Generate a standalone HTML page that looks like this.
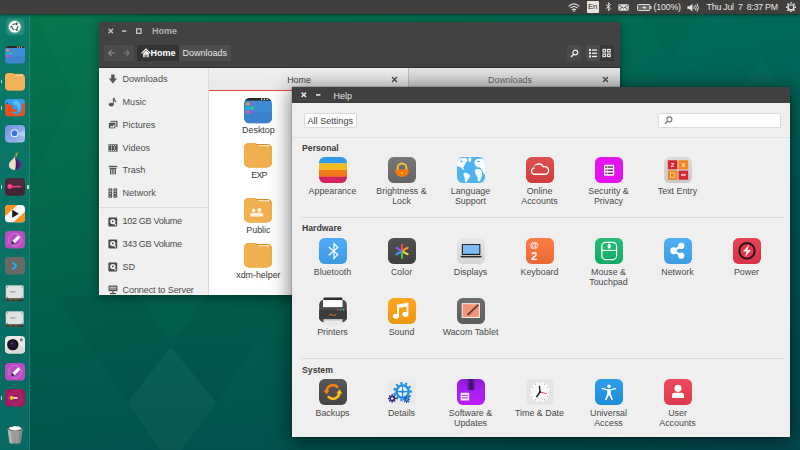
<!DOCTYPE html>
<html>
<head>
<meta charset="utf-8">
<title>Desktop</title>
<style>
*{box-sizing:border-box;margin:0;padding:0}
html,body{width:800px;height:450px;overflow:hidden}
body{position:relative;font-family:"Liberation Sans",sans-serif;font-size:8.9px;color:#444;background:#04685a}
#bg{position:absolute;left:0;top:0;width:800px;height:450px}
#panel{position:absolute;left:0;top:0;width:800px;height:14px;background:#403f3d;color:#e8e8e8;font-size:8.8px;letter-spacing:-.2px;line-height:14px;box-shadow:0 1px 3px rgba(0,0,0,.55)}
#panel span{position:absolute;top:0;white-space:nowrap}
#panel svg{position:absolute}
#launcher{position:absolute;left:0;top:14px;width:30px;height:436px;background:linear-gradient(#0a7b68,#097265 50%,#086962);border-right:1px solid rgba(255,255,255,.10)}
#launcher svg{position:absolute;left:5px;width:20px;height:17.6px}
/* files window */
#files{position:absolute;left:99px;top:22px;width:521px;height:273px;background:#fff;box-shadow:0 2px 10px rgba(0,0,0,.45)}
#files .hdr{position:absolute;left:0;top:0;width:521px;height:46px;background:#424242}
#files .title{position:absolute;left:53px;top:3px;font-weight:bold;color:#b0b0b0;font-size:9px;line-height:12px}
.tb{position:absolute;top:23.3px;height:16px;background:#4d4d4d;color:#e4e4e4;line-height:16px;font-size:9px;white-space:nowrap}
#side{position:absolute;left:0;top:46px;width:110px;height:227px;background:#f0f0f0;border-right:1px solid #dadada;overflow:hidden}
#side div.r{position:absolute;left:23.5px;color:#4c4c4c;line-height:12px;white-space:nowrap;font-size:9.1px}
#side svg{position:absolute;left:9px;width:10px;height:10px}
#tabs{position:absolute;left:110px;top:46px;width:411px;height:22px;background:linear-gradient(#e6e6e6,#d2d2d2);line-height:24.4px;color:#555}
.fl{position:absolute;width:70px;text-align:center;color:#3a3a3a;line-height:11px}
.fi{position:absolute;width:28px;height:26px}
/* settings window */
#set{position:absolute;left:292px;top:87px;width:498px;height:350px;background:#efefef;box-shadow:0 3px 20px 1px rgba(0,0,0,.55),0 0 0 .5px rgba(0,0,0,.25)}
#set .tbar{position:absolute;left:0;top:0;width:498px;height:16px;background:#404040}
#set .sec{position:absolute;left:10px;font-weight:bold;color:#3a3a3a;line-height:12px;font-size:8.7px}
.sep{position:absolute;left:9px;width:483px;height:1px;background:#dcdcdc}
.it{position:absolute;width:69px;height:50px}
.ic{position:absolute;left:21px;top:0;width:28px;height:26px;overflow:visible}
.lb{position:absolute;left:-10px;width:89px;top:28.6px;text-align:center;color:#4a4a4a;line-height:10px}
</style>
</head>
<body>
<svg id="bg" viewBox="0 0 800 450">
<defs>
<linearGradient id="bgt" x1="0" y1="0" x2="1" y2="0"><stop offset="0" stop-color="#0a7a4f"/><stop offset=".4" stop-color="#057451"/><stop offset="1" stop-color="#006b59"/></linearGradient>
<linearGradient id="bgb" x1="0" y1="0" x2="1" y2="0"><stop offset="0" stop-color="#00544a"/><stop offset=".4" stop-color="#00524b"/><stop offset="1" stop-color="#04494e"/></linearGradient>
<linearGradient id="bgm" x1="0" y1="0" x2="0" y2="1"><stop offset="0" stop-color="#fff" stop-opacity="0"/><stop offset="1" stop-color="#fff" stop-opacity="1"/></linearGradient>
<mask id="bgmask"><rect width="800" height="450" fill="url(#bgm)"/></mask>
</defs>
<rect width="800" height="450" fill="url(#bgt)"/>
<rect width="800" height="450" fill="url(#bgb)" mask="url(#bgmask)"/>
<path d="M30 14 L36 14 L73 96 L30 188 Z" fill="#000" opacity=".025"/>
<path d="M55 296 L140 296 L171 347 L206 296 L290 296 L216 402 L171 347 L128 402 Z" fill="#000" opacity=".04"/>
<path d="M171 347 L216 402 L182 450 L160 450 L128 402 Z" fill="#fff" opacity=".03"/>
<path d="M640 14 L700 14 L670 60 Z" fill="#000" opacity=".025"/>
<path d="M762 58 L790 100 L735 100 Z" fill="#fff" opacity=".025"/>

</svg>
<div id="launcher">
<svg style="top:5.6px" viewBox="0 0 20 17.6" overflow="visible"><rect x="1" y="-1.8" width="18.4" height="17" rx="4.5" fill="#fff" opacity=".13"/><circle cx="9.7" cy="6.8" r="6.9" fill="#fff" opacity=".3"/><circle cx="9.7" cy="6.8" r="5.8" fill="#fbfdfc"/><circle cx="9.9" cy="6.8" r="3" fill="none" stroke="#24302e" stroke-width=".95"/><g fill="#fbfdfc"><rect x="9.4" y="2.4" width="1" height="2.4" transform="rotate(60 9.9 6.8)"/><rect x="9.4" y="2.4" width="1" height="2.4" transform="rotate(180 9.9 6.8)"/><rect x="9.4" y="2.4" width="1" height="2.4" transform="rotate(300 9.9 6.8)"/></g><g fill="#24302e"><circle cx="6" cy="6.8" r=".8"/><circle cx="11.9" cy="3.4" r=".8"/><circle cx="11.9" cy="10.2" r=".8"/></g></svg>
<svg style="top:32.1px" viewBox="0 0 20 17.6" overflow="visible"><defs><clipPath id="lc1"><rect width="20" height="17.6" rx="4"/></clipPath></defs><g clip-path="url(#lc1)"><rect width="20" height="17.6" fill="#3f8cd8"/><rect y="10" width="20" height="7.6" fill="#3c84cc"/><rect width="20" height="2" fill="#2a2a2a"/><circle cx="12.6" cy="1" r=".6" fill="#fff"/><circle cx="14.6" cy="1" r=".6" fill="#fff"/><circle cx="16.6" cy="1" r=".6" fill="#fff"/></g><rect x="1.6" y="3.2" width="2.2" height="2" fill="#f5a623"/><rect x="4.6" y="3.2" width="2.2" height="2" fill="#a05ad8"/><rect x="1.6" y="6.2" width="2.2" height="2" fill="#22b2ee"/><rect x="4.6" y="6.2" width="2.2" height="2" fill="#1ee06a"/><rect x="1.6" y="9.2" width="2.2" height="2" fill="#ee5a8c"/><rect x="4.6" y="9.2" width="2.2" height="2" fill="#a04cf0"/></svg>
<svg style="top:58.5px" viewBox="0 0 20 17.6" overflow="visible"><path d="M4 0 H7 Q8.4 0 9.2 .8 H16 Q20 .8 20 4.8 V13.6 Q20 17.6 16 17.6 H4 Q0 17.6 0 13.6 V4 Q0 0 4 0 Z" fill="#dc9226"/><path d="M9.8 1.6 H18 V3 H9.8 Z" fill="#fff4e0"/><path d="M4 0 H6.8 Q8 0 8.8 1.2 Q9.6 2.4 11 2.4 H16.4 Q20 2.4 20 6 V13.6 Q20 17.6 16 17.6 H4 Q0 17.6 0 13.6 V4 Q0 0 4 0 Z" fill="#f3b257"/></svg>
<svg style="top:85.2px" viewBox="0 0 20 17.6" overflow="visible"><defs><clipPath id="lc3"><rect width="20" height="17.6" rx="4"/></clipPath></defs><g clip-path="url(#lc3)"><rect width="20" height="17.6" fill="#f04f1d"/><path d="M0 0 H20 V4 Q17.4 3.4 16.8 6 Q17.8 10 15.6 13.4 Q13.6 16 10.4 16.4 Q12.8 13 11.8 10.4 Q9.8 9.6 8 10.6 Q6.4 8.6 7.6 6 Q4.4 6.2 1.8 4.8 L0 5 Z" fill="#2f9ff0"/><path d="M9 1.6 Q14.6 1 15.4 6.4 Q15.8 10.4 13 13 Q14.4 9.6 12.6 7.6 Q10.6 5.4 8.4 5.2 Q8 3 9 1.6 Z" fill="#5cc0f8"/><path d="M6.6 11.4 Q9.6 14 13 12.4 Q11 15.6 7.6 14 Z" fill="#2f9ff0"/><path d="M1.2 4.6 L3 3.4 L3.4 5.2 Z" fill="#3a2a20"/></g></svg>
<svg style="top:111.4px" viewBox="0 0 20 17.6" overflow="visible"><defs><linearGradient id="lg4" x1="0" y1="0" x2="1" y2="1"><stop offset="0" stop-color="#6d90dc"/><stop offset="1" stop-color="#a9c0ee"/></linearGradient></defs><rect width="20" height="17.6" rx="4" fill="url(#lg4)"/><path d="M10 8.8 L20 6 V12 Z" fill="#c6d6f4" opacity=".7"/><path d="M10 8.8 L3 17.6 H12 Z" fill="#8aa6e4" opacity=".7"/><circle cx="9.6" cy="8.2" r="3.9" fill="#eef3fc"/><circle cx="9.6" cy="8.2" r="2.9" fill="#3c72e2"/></svg>
<svg style="top:138.4px" viewBox="0 0 20 17.6" overflow="visible"><path d="M10.4 4.6 Q10.2 1.6 12.8 -.6 Q12.6 2.4 11.4 4.8 Z" fill="#b8b430"/><path d="M9.8 4.8 Q9.4 2 10.6 .6" stroke="#6a8a2a" stroke-width=".7" fill="none"/><path d="M10 4.2 Q11.4 6.4 14.2 8.6 Q17.6 11.8 15.6 15.4 Q13.6 18.4 9.6 18 Z" fill="#5b2e8e"/><path d="M10 4.2 Q9.2 6.4 6.2 8.6 Q2.8 11.6 4.4 15.2 Q6.2 18.4 10 18 Q11.6 13 10 4.2 Z" fill="#e9dfc2"/><path d="M10 6 Q12.8 11 10.4 17.6 Q15 16 13.6 11 Q12.6 8.4 10 6 Z" fill="#3c1a6a"/></svg>
<svg style="top:164.2px" viewBox="0 0 20 17.6" overflow="visible"><rect width="20" height="17.6" rx="4" fill="#4a2b3c"/><rect y="9" width="20" height="8.6" rx="4" fill="#432636"/><rect x="5" y="7.8" width="11" height="1.7" rx=".8" fill="#e83a86"/><circle cx="4.9" cy="8.6" r="2.5" fill="#f2357e"/><circle cx="4.6" cy="8.2" r="1" fill="#f86aa4"/></svg>
<svg style="top:190.7px" viewBox="0 0 20 17.6" overflow="visible"><defs><clipPath id="lc7"><rect width="20" height="17.6" rx="4"/></clipPath></defs><g clip-path="url(#lc7)"><rect width="20" height="17.6" fill="#fafafa"/><path d="M0 0 H12.4 L0 11.2 Z" fill="#f7941d"/><path d="M20 17.6 H8 L20 6.8 Z" fill="#f7941d"/><path d="M7.2 4.8 L13.8 8.8 L7.2 12.8 Z" fill="#1a1a1a"/></g></svg>
<svg style="top:217.0px" viewBox="0 0 20 17.6" overflow="visible"><rect width="20" height="17.6" rx="4" fill="#b94cc2"/><circle cx="10" cy="8.8" r="6.4" fill="none" stroke="#d48ada" stroke-width=".9" opacity=".8"/><path d="M7.4 10 L13.2 4.2 L15.4 6.4 L9.6 12.2 Z" fill="#fdfdfd"/><path d="M7.4 10 L9.6 12.2 L6 13.4 Z" fill="#2a2a2a"/></svg>
<svg style="top:243.2px" viewBox="0 0 20 17.6" overflow="visible"><rect width="20" height="17.6" rx="4" fill="#6b6868"/><path d="M7.4 5 L11.4 8.8 L7.4 12.6" fill="none" stroke="#1ab9f2" stroke-width="1.7"/></svg>
<svg style="top:269.7px" viewBox="0 0 20 17.6" overflow="visible"><rect x="1" y="1.6" width="17.4" height="13" rx="1.2" fill="#dfe2e2"/><rect x="1" y="1.6" width="17.4" height="13" rx="1.2" fill="none" stroke="#c2c6c6" stroke-width=".6"/><rect x="5" y="7" width="5.6" height="1.6" fill="#a8aeb0"/><g fill="#555"><circle cx="2.4" cy="3" r=".55"/><circle cx="17" cy="3" r=".55"/><circle cx="2.4" cy="13.2" r=".55"/><circle cx="17" cy="13.2" r=".55"/></g><rect x="1" y="14.4" width="17.4" height="2.4" fill="#3e3a30"/><rect x="4" y="15" width="3" height="1.2" fill="#8a6a2a"/><rect x="9" y="15" width="4" height="1.2" fill="#7a5a22"/></svg>
<svg style="top:296.0px" viewBox="0 0 20 17.6" overflow="visible"><rect x="1" y="1.6" width="17.4" height="13" rx="1.2" fill="#dfe2e2"/><rect x="1" y="1.6" width="17.4" height="13" rx="1.2" fill="none" stroke="#c2c6c6" stroke-width=".6"/><rect x="5" y="7" width="5.6" height="1.6" fill="#a8aeb0"/><g fill="#555"><circle cx="2.4" cy="3" r=".55"/><circle cx="17" cy="3" r=".55"/><circle cx="2.4" cy="13.2" r=".55"/><circle cx="17" cy="13.2" r=".55"/></g><rect x="1" y="14.4" width="17.4" height="2.4" fill="#3e3a30"/><rect x="4" y="15" width="3" height="1.2" fill="#8a6a2a"/><rect x="9" y="15" width="4" height="1.2" fill="#7a5a22"/></svg>
<svg style="top:322.0px" viewBox="0 0 20 17.6" overflow="visible"><rect width="20" height="17.6" rx="4" fill="#e9e9e9"/><rect y="10" width="20" height="7.6" rx="4" fill="#dcdcdc"/><rect x="15" y="2.6" width="2.6" height="2.6" rx=".4" fill="#7a7a7a"/><circle cx="7.8" cy="8.6" r="5.7" fill="#161418"/><circle cx="7.8" cy="8.6" r="3.4" fill="#2a1840"/><circle cx="6.8" cy="7.4" r="1.2" fill="#4a3470"/></svg>
<svg style="top:348.5px" viewBox="0 0 20 17.6" overflow="visible"><rect width="20" height="17.6" rx="4" fill="#b94cc2"/><circle cx="10" cy="8.8" r="6.4" fill="none" stroke="#d48ada" stroke-width=".9" opacity=".8"/><path d="M7.4 10 L13.2 4.2 L15.4 6.4 L9.6 12.2 Z" fill="#fdfdfd"/><path d="M7.4 10 L9.6 12.2 L6 13.4 Z" fill="#2a2a2a"/></svg>
<svg style="top:375.0px" viewBox="0 0 20 17.6" overflow="visible"><rect width="20" height="17.6" rx="4" fill="#a11a5e"/><circle cx="10" cy="8.8" r="7" fill="none" stroke="#c4508a" stroke-width=".6" opacity=".7"/><circle cx="10" cy="8.8" r="4.6" fill="none" stroke="#c4508a" stroke-width=".6" opacity=".7"/><rect x="7" y="8" width="5.6" height="1.7" rx=".5" fill="#fbeef2"/><circle cx="6.6" cy="8.8" r="2.1" fill="#fba81e"/><circle cx="6.6" cy="8.8" r=".8" fill="#fde08a"/></svg>
<svg style="top:412.2px" viewBox="0 0 20 17.6" overflow="visible"><path d="M2.6 2.4 H17.6 L15.8 16 Q15.6 17.4 14 17.4 H6.2 Q4.6 17.4 4.4 16 Z" fill="#9b9b9b"/><path d="M2.6 2.4 H6 L7 17.4 H6.2 Q4.6 17.4 4.4 16 Z" fill="#b4b4b4"/><path d="M14.4 2.4 H17.6 L15.8 16 Q15.6 17.4 14 17.4 H13.4 Z" fill="#868686"/><ellipse cx="10.1" cy="2.6" rx="7.7" ry="2.2" fill="#4a4a4a"/><path d="M3.6 2.8 Q5 .2 7.4 1 Q9 -.8 11.4 .6 Q14 -.4 15.2 1.4 Q16.8 1.6 16.6 3 Q13 4.6 10 4.4 Q6 4.4 3.6 2.8 Z" fill="#f6f6f2"/></svg>
<div style="position:absolute;left:0.8px;top:65.9px;width:1.6px;height:3.2px;background:#e8f0f0;border-radius:.6px;opacity:.85"></div>
<div style="position:absolute;left:0.8px;top:92.4px;width:1.6px;height:3.2px;background:#e8f0f0;border-radius:.6px;opacity:.85"></div>
<div style="position:absolute;left:0.8px;top:171.4px;width:1.6px;height:3.2px;background:#e8f0f0;border-radius:.6px;opacity:.85"></div>
<div style="position:absolute;left:27.2px;top:171.4px;width:1.6px;height:3.2px;background:#e8f0f0;border-radius:.6px;opacity:.85"></div>
<div style="position:absolute;left:0.8px;top:382.4px;width:1.6px;height:3.2px;background:#e8f0f0;border-radius:.6px;opacity:.85"></div>
</div>
<div id="panel">
<svg style="left:568px;top:3px;width:12px;height:9px" viewBox="0 0 12 9"><g fill="none" stroke="#e4e4e4" stroke-width="1.15"><path d="M.6 3.4 Q6 -1.6 11.4 3.4"/><path d="M2.4 5.2 Q6 1.8 9.6 5.2"/><path d="M4.2 7 Q6 5.2 7.8 7"/></g><circle cx="6" cy="8.1" r=".8" fill="#e4e4e4"/></svg>
<div style="position:absolute;left:586.6px;top:1.4px;width:12px;height:11.2px;background:#e9e6e0;border-radius:1px;color:#1e1e1e;font-size:7.8px;line-height:11.4px;text-align:center;letter-spacing:-.1px">En</div>
<svg style="left:604.6px;top:2.4px;width:7px;height:9.4px" viewBox="0 0 7 9.4"><path d="M1 2.6 L5.6 6.6 L3.4 8.8 V.6 L5.6 2.8 L1 6.8" fill="none" stroke="#e4e4e4" stroke-width=".9"/></svg>
<svg style="left:618.2px;top:3.6px;width:11px;height:7px" viewBox="0 0 11 7"><rect x=".3" y=".3" width="10.4" height="6.4" rx=".6" fill="#e0e0e0"/><path d="M.8 .8 L5.5 4.2 L10.2 .8 M.8 6.2 L4 3.4 M10.2 6.2 L7 3.4" stroke="#3c3b3a" stroke-width=".8" fill="none"/></svg>
<svg style="left:637px;top:3.6px;width:15px;height:7px" viewBox="0 0 15 7"><rect x=".5" y=".5" width="12.4" height="6" rx=".8" fill="#6a6a68" stroke="#dcdcdc" stroke-width="1"/><rect x="13.2" y="2" width="1.3" height="3" fill="#dcdcdc"/><path d="M5.2 3.6 H8.6 M7 2.2 L8.8 3.6 L7 5" stroke="#eee" stroke-width=".9" fill="none"/></svg>
<span style="left:653.6px">(100%)</span>
<svg style="left:687.4px;top:2.6px;width:12.4px;height:9.2px" viewBox="0 0 12.4 9.2"><path d="M.4 3.2 H2.6 L5.4 .8 V8.4 L2.6 6 H.4 Z" fill="#e4e4e4"/><g fill="none" stroke="#e4e4e4" stroke-width="1"><path d="M6.8 3 Q7.8 4.6 6.8 6.2"/><path d="M8.4 1.8 Q10.2 4.6 8.4 7.4"/><path d="M10 .6 Q12.6 4.6 10 8.6"/></g></svg>
<span style="left:706.6px;white-space:pre;word-spacing:-.2px">Thu Jul  7  8:37 PM</span>
<svg style="left:786px;top:2.2px;width:10px;height:10px" viewBox="0 0 10 10"><circle cx="5" cy="5.2" r="2.9" fill="none" stroke="#e4e4e4" stroke-width="1.5"/><g stroke="#e4e4e4" stroke-width="1.5"><path d="M1.2 5.2 H0 M8.8 5.2 H10 M5 9 V10 M2.3 2.5 L1.4 1.6 M7.7 2.5 L8.6 1.6 M2.3 7.9 L1.4 8.8 M7.7 7.9 L8.6 8.8"/></g><path d="M5 0 V4.4" stroke="#3c3b3a" stroke-width="2.6"/><path d="M5 0 V4.2" stroke="#e4e4e4" stroke-width="1.1"/></svg>

</div>
<div id="files">
<div class="hdr"></div><div style="position:absolute;left:0;top:45px;width:521px;height:1px;background:#303030"></div>
<svg style="position:absolute;left:8px;top:5px;width:40px;height:8px" viewBox="0 0 40 8"><path d="M1.6 1.8 L6 6.2 M6 1.8 L1.6 6.2" stroke="#c4c4c4" stroke-width="1.4"/><path d="M15 4.1 h4.4" stroke="#c4c4c4" stroke-width="1.5"/><rect x="29.6" y="1.9" width="4.4" height="4.4" fill="none" stroke="#c4c4c4" stroke-width="1.3"/></svg>
<div class="title">Home</div>
<div class="tb" style="left:5px;width:29.5px;background:#4b4b4b"></div>
<svg style="position:absolute;left:5px;top:23.3px;width:30px;height:16px" viewBox="0 0 30 16"><path d="M5 8 h6 M7.6 5.2 L4.8 8 L7.6 10.8" stroke="#8e8e8e" stroke-width="1.2" fill="none"/><path d="M19 8 h6 M22.4 5.2 L25.2 8 L22.4 10.8" stroke="#7c7c7c" stroke-width="1.2" fill="none"/><path d="M14.8 1 v14" stroke="#444" stroke-width=".6"/></svg>
<div class="tb" style="left:38px;width:41.5px;background:#333;color:#fff;font-weight:bold;padding-left:13.5px">Home</div>
<svg style="position:absolute;left:42px;top:26.3px;width:10px;height:10px" viewBox="0 0 10 10"><path d="M.6 5.4 L5 1 L9.4 5.4" stroke="#fff" stroke-width="1.2" fill="none"/><path d="M2.2 5.2 V9.2 H3.6 V6.6 H4.6 V9.2 H5.4 V6.6 H6.4 V9.2 H7.8 V5.2 L5 2.6 Z" fill="#fff"/></svg>
<div class="tb" style="left:79.5px;width:52.5px;text-align:center">Downloads</div>
<div class="tb" style="left:468px;width:14px;background:#4b4b4b"></div>
<svg style="position:absolute;left:470.5px;top:26.8px;width:9px;height:9px" viewBox="0 0 9 9"><circle cx="5.3" cy="3.5" r="2.4" fill="none" stroke="#f0f0f0" stroke-width="1.2"/><path d="M3.6 5.2 L1 7.9" stroke="#f0f0f0" stroke-width="1.4"/></svg>
<div class="tb" style="left:487px;width:13.5px;background:#4d4d4d"></div>
<div class="tb" style="left:500.5px;width:14px;background:#383838"></div>
<svg style="position:absolute;left:487px;top:23.3px;width:28px;height:16px" viewBox="0 0 28 16"><g fill="#f0f0f0"><rect x="3" y="4" width="2" height="2"/><rect x="3" y="7.2" width="2" height="2"/><rect x="3" y="10.4" width="2" height="2"/><rect x="6" y="4.4" width="5" height="1.3"/><rect x="6" y="7.6" width="5" height="1.3"/><rect x="6" y="10.8" width="5" height="1.3"/></g><g fill="none" stroke="#f0f0f0" stroke-width="1.1"><rect x="17" y="4.4" width="2.6" height="2.6"/><rect x="21.6" y="4.4" width="2.6" height="2.6"/><rect x="17" y="9" width="2.6" height="2.6"/><rect x="21.6" y="9" width="2.6" height="2.6"/></g></svg>
<div id="side">
<svg style="top:5.5px" viewBox="0 0 10 10"><path d="M3.2 .4 h3.4 v4.2 h2.4 L4.9 9.6 L.8 4.6 h2.4 z" fill="#555"/></svg>
<div class="r" style="top:4.7px">Downloads</div>
<svg style="top:28.6px" viewBox="0 0 10 10"><path d="M5.4 1 V7.2" stroke="#555" stroke-width="1"/><path d="M5.4 1 L6.4 .6 Q7 3.6 8.6 5 L8 5.6 Q6.4 4.4 5.6 3 Z" fill="#555"/><ellipse cx="3.2" cy="7.6" rx="2.5" ry="1.9" fill="#555"/></svg>
<div class="r" style="top:27.8px">Music</div>
<svg style="top:51.6px" viewBox="0 0 10 10"><rect x="2.6" y=".8" width="7" height="6.2" fill="#666"/><rect x=".6" y="2.4" width="7.2" height="6.4" fill="#555" stroke="#f0f0f0" stroke-width=".7"/><path d="M1.8 7.6 L3.4 5.6 L4.4 6.6 L6.4 4 V7.6 Z" fill="#e6e6e6"/></svg>
<div class="r" style="top:50.6px">Pictures</div>
<svg style="top:74.6px" viewBox="0 0 10 10"><rect x=".4" y="1.2" width="9.2" height="7.4" fill="#555"/><g fill="#f0f0f0"><rect x="1.2" y="1.8" width="1" height="1"/><rect x="3.2" y="1.8" width="1" height="1"/><rect x="5.2" y="1.8" width="1" height="1"/><rect x="7.2" y="1.8" width="1" height="1"/><rect x="1.2" y="7" width="1" height="1"/><rect x="3.2" y="7" width="1" height="1"/><rect x="5.2" y="7" width="1" height="1"/><rect x="7.2" y="7" width="1" height="1"/><rect x="3.1" y="3.4" width=".6" height="3"/><rect x="6.1" y="3.4" width=".6" height="3"/></g></svg>
<div class="r" style="top:73.5px">Videos</div>
<svg style="top:97px" viewBox="0 0 10 10"><rect x=".8" y=".8" width="8.4" height="1.5" fill="#555"/><rect x="1.6" y="3" width="6.8" height="1" fill="#555"/><rect x="2" y="4" width="1.4" height="5.4" fill="#555"/><rect x="4.3" y="4" width="1.4" height="5.4" fill="#555"/><rect x="6.6" y="4" width="1.4" height="5.4" fill="#555"/></svg>
<div class="r" style="top:96px">Trash</div>
<svg style="top:120px" viewBox="0 0 10 10"><g fill="none" stroke="#555" stroke-width="1.1"><rect x="1" y="1" width="2.6" height="2"/><rect x="6" y="1" width="2.6" height="2"/><rect x="1" y="4.4" width="2.6" height="2"/><rect x="6" y="4.4" width="2.6" height="2"/><rect x="1" y="7.6" width="2.6" height="1.6"/><rect x="6" y="7.6" width="2.6" height="1.6"/></g></svg>
<div class="r" style="top:119px">Network</div>
<div style="position:absolute;left:0;top:139px;width:110px;height:1px;background:#dedede"></div>
<svg style="top:148.6px" viewBox="0 0 10 10"><rect x=".4" y=".6" width="8.8" height="8.8" rx=".8" fill="#4a4a4a"/><circle cx="4.8" cy="4.6" r="2.7" fill="#f0f0f0"/><circle cx="4.8" cy="4.6" r="1" fill="#4a4a4a"/><path d="M5 5 L8 8.4" stroke="#f0f0f0" stroke-width="1.2"/></svg>
<div class="r" style="top:147.3px;letter-spacing:-.34px">102 GB Volume</div>
<svg style="top:171.4px" viewBox="0 0 10 10"><rect x=".4" y=".6" width="8.8" height="8.8" rx=".8" fill="#4a4a4a"/><circle cx="4.8" cy="4.6" r="2.7" fill="#f0f0f0"/><circle cx="4.8" cy="4.6" r="1" fill="#4a4a4a"/><path d="M5 5 L8 8.4" stroke="#f0f0f0" stroke-width="1.2"/></svg>
<div class="r" style="top:170px;letter-spacing:-.34px">343 GB Volume</div>
<svg style="top:194.4px" viewBox="0 0 10 10"><rect x=".4" y=".6" width="8.8" height="8.8" rx=".8" fill="#4a4a4a"/><circle cx="4.8" cy="4.6" r="2.7" fill="#f0f0f0"/><circle cx="4.8" cy="4.6" r="1" fill="#4a4a4a"/><path d="M5 5 L8 8.4" stroke="#f0f0f0" stroke-width="1.2"/></svg>
<div class="r" style="top:193px">SD</div>
<svg style="top:216.6px" viewBox="0 0 10 10"><rect x=".6" y=".6" width="8.8" height="5.6" fill="#4a4a4a"/><rect x="1.6" y="1.8" width="6.8" height=".9" fill="#f0f0f0"/><rect x="1.6" y="3.6" width="6.8" height=".9" fill="#f0f0f0"/><rect x="4.4" y="6.2" width="1.2" height="2" fill="#4a4a4a"/><rect x="2" y="8" width="6" height="1.2" fill="#4a4a4a"/></svg>
<div class="r" style="top:215.5px;letter-spacing:-.12px">Connect to Server</div>
</div>
<div id="tabs">
<div style="position:absolute;left:0;top:0;width:199px;height:22px;background:linear-gradient(#efefef,#e9e9e9)"></div>
<div style="position:absolute;left:0;top:21.6px;width:199px;height:1.4px;background:#e8483a"></div>
<div style="position:absolute;left:198.5px;top:0;width:1px;height:21px;background:#bdbdbd"></div>
<div style="position:absolute;left:60px;width:60px;top:0;text-align:center;color:#3c3c3c">Home</div>
<div style="position:absolute;left:271px;width:60px;top:0;text-align:center;color:#666">Downloads</div>
<svg style="position:absolute;left:182px;top:8px;width:7px;height:7px" viewBox="0 0 7 7"><path d="M1 1 L6 6 M6 1 L1 6" stroke="#4a4a4a" stroke-width="1.3"/></svg>
<svg style="position:absolute;left:392.5px;top:8px;width:7px;height:7px" viewBox="0 0 7 7"><path d="M1 1 L6 6 M6 1 L1 6" stroke="#4a4a4a" stroke-width="1.3"/></svg>
</div>
<svg class="fi" style="left:145px;top:75.6px" viewBox="0 0 28 26"><defs><clipPath id="dsk"><rect width="28" height="25.4" rx="5.6"/></clipPath></defs><g clip-path="url(#dsk)"><rect width="28" height="25.4" fill="#3f8cd6"/><rect y="14" width="28" height="11.4" fill="#3a83cc"/><rect width="28" height="2.6" fill="#262626"/><circle cx="17.6" cy="1.3" r=".8" fill="#fff"/><circle cx="20.4" cy="1.3" r=".8" fill="#fff"/><circle cx="23.2" cy="1.3" r=".8" fill="#fff"/></g><rect x="2.4" y="4.4" width="3" height="2.8" rx=".5" fill="#f5a623"/><rect x="6.6" y="4.4" width="3" height="2.8" rx=".5" fill="#9b59d6"/><rect x="2.4" y="8.6" width="3" height="2.8" rx=".5" fill="#22b2ee"/><rect x="6.6" y="8.6" width="3" height="2.8" rx=".5" fill="#1ee06a"/><rect x="2.4" y="12.8" width="3" height="2.8" rx=".5" fill="#ee5a8c"/><rect x="6.6" y="12.8" width="3" height="2.8" rx=".5" fill="#a04cf0"/></svg>
<div class="fl" style="left:124.4px;top:102.5px">Desktop</div>
<svg class="fi" style="left:145px;top:121px" viewBox="0 0 28 26"><path d="M5.4 0 H10 Q12 0 13 1 H22.6 Q28 1 28 6.4 V19 Q28 24.4 22.6 24.4 H5.4 Q0 24.4 0 19 V5.4 Q0 0 5.4 0 Z" fill="#d98d20"/><path d="M13.6 2.2 H25.6 V4 H13.6 Z" fill="#fff6e6"/><path d="M5.4 0 H9.6 Q11.4 0 12.4 1.6 Q13.4 3.2 15.4 3.2 H23 Q28 3.2 28 8 V19 Q28 24.4 22.6 24.4 H5.4 Q0 24.4 0 19 V5.4 Q0 0 5.4 0 Z" fill="#f1af50"/></svg>
<div class="fl" style="left:124.9px;top:148px;letter-spacing:-.9px">EXP</div>
<svg class="fi" style="left:145px;top:176px" viewBox="0 0 28 26"><path d="M5.4 0 H10 Q12 0 13 1 H22.6 Q28 1 28 6.4 V19 Q28 24.4 22.6 24.4 H5.4 Q0 24.4 0 19 V5.4 Q0 0 5.4 0 Z" fill="#d98d20"/><path d="M13.6 2.2 H25.6 V4 H13.6 Z" fill="#fff6e6"/><path d="M5.4 0 H9.6 Q11.4 0 12.4 1.6 Q13.4 3.2 15.4 3.2 H23 Q28 3.2 28 8 V19 Q28 24.4 22.6 24.4 H5.4 Q0 24.4 0 19 V5.4 Q0 0 5.4 0 Z" fill="#f1af50"/><g fill="#fdf1dc"><circle cx="9.6" cy="12.4" r="1.9"/><path d="M6 18.6 v-1.6 q0 -2.2 3.6 -2.2 q3.6 0 3.6 2.2 v1.6 z"/><circle cx="15.4" cy="12" r="2.1"/><path d="M11.6 18.6 v-1.8 q0 -2.4 3.8 -2.4 q3.8 0 3.8 2.4 v1.8 z"/></g></svg>
<div class="fl" style="left:124.4px;top:202.5px">Public</div>
<svg class="fi" style="left:145px;top:221px" viewBox="0 0 28 26"><path d="M5.4 0 H10 Q12 0 13 1 H22.6 Q28 1 28 6.4 V19 Q28 24.4 22.6 24.4 H5.4 Q0 24.4 0 19 V5.4 Q0 0 5.4 0 Z" fill="#d98d20"/><path d="M13.6 2.2 H25.6 V4 H13.6 Z" fill="#fff6e6"/><path d="M5.4 0 H9.6 Q11.4 0 12.4 1.6 Q13.4 3.2 15.4 3.2 H23 Q28 3.2 28 8 V19 Q28 24.4 22.6 24.4 H5.4 Q0 24.4 0 19 V5.4 Q0 0 5.4 0 Z" fill="#f1af50"/></svg>
<div class="fl" style="left:124.4px;top:248px">xdm-helper</div>

</div>
<div id="set">
<div class="tbar"></div>
<svg style="position:absolute;left:8px;top:4px;width:24px;height:8px" viewBox="0 0 24 8"><path d="M1.6 1.6 L6 6 M6 1.6 L1.6 6" stroke="#e6e6e6" stroke-width="1.5"/><path d="M16 3.9 h4.4" stroke="#e6e6e6" stroke-width="1.6"/></svg>
<div style="position:absolute;left:41.5px;top:2.5px;color:#e2e2e2;font-size:9px;line-height:12px">Help</div>
<div style="position:absolute;left:12px;top:25.5px;width:52.5px;height:15.5px;background:#fdfdfd;border:1px solid #d9d9d9;border-radius:1.5px;line-height:14px;text-align:center;color:#444;font-size:9.1px">All Settings</div>
<div style="position:absolute;left:366px;top:25.5px;width:123px;height:15.5px;background:#fff;border:1px solid #dcdcdc;border-radius:1.5px"></div>
<svg style="position:absolute;left:372px;top:29px;width:9px;height:9px" viewBox="0 0 9 9"><circle cx="5.4" cy="3.4" r="2.5" fill="none" stroke="#7a7a7a" stroke-width="1.1"/><path d="M3.6 5.2 L1 7.8" stroke="#7a7a7a" stroke-width="1.3"/></svg>
<div class="sep" style="left:0;width:498px;top:50px;background:#e2e2e2"></div>
<div class="sec" style="top:55px">Personal</div>
<div class="sep" style="top:129.5px"></div>
<div class="sec" style="top:135px">Hardware</div>
<div class="sep" style="top:270.5px"></div>
<div class="sec" style="top:276.7px">System</div>
<svg width="0" height="0" style="position:absolute"><defs>
<clipPath id="sqc"><rect width="28" height="25.6" rx="5.6" ry="5.6"/></clipPath>
<linearGradient id="gsh" x1="0" y1="0" x2="0" y2="1"><stop offset="0" stop-color="#fff" stop-opacity=".07"/><stop offset="1" stop-color="#000" stop-opacity=".07"/></linearGradient>
</defs></svg>
<div class="it" style="left:6px;top:70px"><svg class="ic" viewBox="0 0 28 25.6" preserveAspectRatio="none"><g clip-path="url(#sqc)"><rect width="28" height="6.4" fill="#2f9ceb"/><rect y="6.2" width="28" height="6.8" fill="#f3bb21"/><rect y="12.8" width="28" height="6.8" fill="#f17816"/><rect y="19.4" width="28" height="6.4" fill="#d5215f"/></g></svg><div class="lb">Appearance</div></div>
<div class="it" style="left:75px;top:70px"><svg class="ic" viewBox="0 0 28 25.6" preserveAspectRatio="none"><rect width="28" height="25.6" rx="5.6" ry="5.6" fill="#6c6c6c"/><rect width="28" height="25.6" rx="5.6" ry="5.6" fill="url(#gsh)"/><path d="M9.6 13 V10.6 a4.4 4.2 0 0 1 8.8 0 V13" fill="none" stroke="#fbc12e" stroke-width="1.9"/><path d="M7.2 12.2 h13.6 v1.6 a6.8 6 0 0 1 -13.6 0 z" fill="#f57a0c"/><circle cx="14" cy="15.6" r="1.2" fill="#fbb52e"/></svg><div class="lb">Brightness &amp;<br>Lock</div></div>
<div class="it" style="left:144px;top:70px"><svg class="ic" viewBox="0 0 28 25.6" preserveAspectRatio="none"><rect width="28" height="25.6" rx="5.6" ry="5.6" fill="#4db3f1"/><g clip-path="url(#sqc)" fill="#f6fcff"><path d="M0 3 Q3 .8 9 .8 L10.6 3.4 Q8.6 5.6 7.6 8 Q6.4 9.6 6.4 11 L7.4 13 L5.6 12.4 Q4.4 10.4 2.6 9.6 L0 9 Z"/><path d="M11 1 Q13 .2 14.8 1 L13.4 5.2 L11.6 4.4 Z"/><path d="M6.6 15.8 Q9.6 14.8 13.2 18 Q12.4 21 10.4 23 L9.6 25.6 L8 24 Q8 20 6.6 18 Z"/><path d="M17.6 3.6 Q19 1.8 22 1.6 Q25.4 1 28 2.4 V17 Q27 18 26.4 16 Q25.6 13 24.4 12 L22.8 10.4 L20.4 10 L18.4 8.6 Q17 6 17.6 3.6 Z"/><path d="M18 12.4 Q21 11.2 24 12.8 Q26 15 25 18 Q24 22 22.6 24.2 L21 23.6 Q20.6 19 18.6 16.8 Q17.4 14.2 18 12.4 Z"/><circle cx="4.6" cy="4.4" r="1" fill="#4db3f1"/><path d="M20 4 h3 v1 h-3z" fill="#4db3f1"/></g></svg><div class="lb">Language<br>Support</div></div>
<div class="it" style="left:213px;top:70px"><svg class="ic" viewBox="0 0 28 25.6" preserveAspectRatio="none"><rect width="28" height="25.6" rx="5.6" ry="5.6" fill="#df4143"/><rect width="28" height="25.6" rx="5.6" ry="5.6" fill="url(#gsh)"/><path d="M8 17 a3.2 3.2 0 0 1 .4 -6.3 a4.6 4.6 0 0 1 8.8 -1 a3.7 3.7 0 0 1 2.8 7.3 z" fill="none" stroke="#fff" stroke-width="1.3" stroke-linejoin="round"/><path d="M8.6 10.6 l1.7 -2.6" stroke="#3a2020" stroke-width=".9"/></svg><div class="lb">Online<br>Accounts</div></div>
<div class="it" style="left:282px;top:70px"><svg class="ic" viewBox="0 0 28 25.6" preserveAspectRatio="none"><rect width="28" height="25.6" rx="5.6" ry="5.6" fill="#e312ee"/><rect x="9" y="7.6" width="10.2" height="10.8" rx=".8" fill="#fbeffd"/><g fill="#5b2a60"><rect x="10.2" y="9.2" width="1.6" height="1.5"/><rect x="12.6" y="9.3" width="5.4" height="1.3"/><rect x="12.6" y="12.4" width="5.4" height="1.3"/><rect x="10.2" y="15.3" width="1.6" height="1.5"/><rect x="12.6" y="15.4" width="5.4" height="1.3"/></g><rect x="10.2" y="12.3" width="1.6" height="1.5" fill="#e0284a"/></svg><div class="lb">Security &amp;<br>Privacy</div></div>
<div class="it" style="left:351px;top:70px"><svg class="ic" viewBox="0 0 28 25.6" preserveAspectRatio="none"><rect width="28" height="25.6" rx="5.6" ry="5.6" fill="#d9d9d9"/><rect width="28" height="25.6" rx="5.6" ry="5.6" fill="url(#gsh)"/><rect x="3.8" y="3.2" width="9.6" height="9" fill="#d8252d"/><rect x="14.6" y="3.2" width="9.6" height="9" fill="#f5831f"/><rect x="3.8" y="13.4" width="9.6" height="9" fill="#f5831f"/><rect x="14.6" y="13.4" width="9.6" height="9" fill="#d8252d"/><text x="8.6" y="10" font-size="6" font-weight="bold" fill="#fff" text-anchor="middle" font-family="Liberation Sans,sans-serif">Z</text><text x="19.4" y="10" font-size="6" font-weight="bold" fill="#ffe9d0" text-anchor="middle" font-family="Liberation Sans,sans-serif">X</text><rect x="6.4" y="15.6" width="4.4" height="4.4" fill="none" stroke="#ffe0c0" stroke-width=".8"/><rect x="17" y="16.6" width="4.8" height="2.2" fill="#f7b0b0"/></svg><div class="lb">Text Entry</div></div>
<div class="it" style="left:6px;top:151px"><svg class="ic" viewBox="0 0 28 25.6" preserveAspectRatio="none"><rect width="28" height="25.6" rx="5.6" ry="5.6" fill="#43a5f5"/><rect width="28" height="25.6" rx="5.6" ry="5.6" fill="url(#gsh)"/><path d="M9.8 8.8 L18.8 16.4 L15 20.2 V5.6 L18.8 9.4 L9.8 17" fill="none" stroke="#fff" stroke-width="1.2" stroke-linejoin="miter"/></svg><div class="lb">Bluetooth</div></div>
<div class="it" style="left:75px;top:151px"><svg class="ic" viewBox="0 0 28 25.6" preserveAspectRatio="none"><rect width="28" height="25.6" rx="5.6" ry="5.6" fill="#444"/><rect width="28" height="25.6" rx="5.6" ry="5.6" fill="url(#gsh)"/><g stroke-width="2.1" stroke-linecap="round"><path d="M14 11.6 V6.4" stroke="#f04848"/><path d="M15.2 12.2 L19.6 9.6" stroke="#f59a2a"/><path d="M15.2 13.6 L19.6 16" stroke="#f2d630"/><path d="M14 14.2 V19.6" stroke="#46c850"/><path d="M12.8 13.6 L8.4 16.2" stroke="#3aa0f0"/><path d="M12.8 12.2 L8.4 9.6" stroke="#8a5ae0"/></g></svg><div class="lb">Color</div></div>
<div class="it" style="left:144px;top:151px"><svg class="ic" viewBox="0 0 28 25.6" preserveAspectRatio="none"><rect width="28" height="25.6" rx="5.6" ry="5.6" fill="#e5e5e5"/><rect width="28" height="25.6" rx="5.6" ry="5.6" fill="url(#gsh)"/><rect x="4.8" y="5.8" width="18.6" height="11" rx=".8" fill="#1c1c1c"/><rect x="5.9" y="6.8" width="16.4" height="8.8" fill="#7dbbf6"/><path d="M3.4 17.6 h21.4 l-.8 1.5 h-19.8 z" fill="#2a2a2a"/><rect x="3.2" y="16.8" width="21.8" height=".9" fill="#bdbdbd"/></svg><div class="lb">Displays</div></div>
<div class="it" style="left:213px;top:151px"><svg class="ic" viewBox="0 0 28 25.6" preserveAspectRatio="none"><rect width="28" height="25.6" rx="5.6" ry="5.6" fill="#fc7238"/><rect width="28" height="25.6" rx="5.6" ry="5.6" fill="url(#gsh)"/><text x="8.3" y="10" font-size="8.8" font-weight="bold" fill="#fff" text-anchor="middle" font-family="Liberation Sans,sans-serif">@</text><text x="8.3" y="21.2" font-size="10.8" font-weight="bold" fill="#fff" text-anchor="middle" font-family="Liberation Sans,sans-serif">2</text></svg><div class="lb">Keyboard</div></div>
<div class="it" style="left:282px;top:151px"><svg class="ic" viewBox="0 0 28 25.6" preserveAspectRatio="none"><rect width="28" height="25.6" rx="5.6" ry="5.6" fill="#14b86b"/><rect width="28" height="25.6" rx="5.6" ry="5.6" fill="url(#gsh)"/><rect x="6.8" y="4.4" width="14.8" height="16.8" rx="3.8" fill="none" stroke="#fff" stroke-width="1.25"/><path d="M6.8 12.2 h14.8" stroke="#fff" stroke-width="1.15"/><ellipse cx="14.2" cy="8" rx="1.6" ry="2.7" fill="#fff"/></svg><div class="lb">Mouse &amp;<br>Touchpad</div></div>
<div class="it" style="left:351px;top:151px"><svg class="ic" viewBox="0 0 28 25.6" preserveAspectRatio="none"><rect width="28" height="25.6" rx="5.6" ry="5.6" fill="#40a9f4"/><rect width="28" height="25.6" rx="5.6" ry="5.6" fill="url(#gsh)"/><path d="M17 7.8 L9.6 12.6 L17 17.4" fill="none" stroke="#fff" stroke-width="2"/><circle cx="9.6" cy="12.6" r="3.4" fill="#fff"/><circle cx="17.2" cy="7.8" r="3.1" fill="#fff"/><circle cx="17.2" cy="17.4" r="3.1" fill="#fff"/></svg><div class="lb">Network</div></div>
<div class="it" style="left:420px;top:151px"><svg class="ic" viewBox="0 0 28 25.6" preserveAspectRatio="none"><rect width="28" height="25.6" rx="5.6" ry="5.6" fill="#e8354b"/><rect width="28" height="25.6" rx="5.6" ry="5.6" fill="url(#gsh)"/><circle cx="14" cy="12.6" r="7.7" fill="#e8354b" stroke="#1e1216" stroke-width="1.8"/><path d="M16 6.6 L10 13.4 H13.6 L12 18.8 L18 11.8 H14.4 Z" fill="#fff"/></svg><div class="lb">Power</div></div>
<div class="it" style="left:6px;top:211px"><svg class="ic" viewBox="0 0 28 25.6" preserveAspectRatio="none"><rect x="4.4" y="-.6" width="19" height="3" rx="1" fill="#2b2b2b"/><rect x=".2" y="1.6" width="27.6" height="22.4" rx="5" fill="#484848"/><rect x=".2" y="12" width="27.6" height="9" fill="#3c3c3c"/><rect x="4" y="2" width="19.6" height="7" fill="#fbfbfb"/><rect x="4.6" y="21" width="18.8" height="5.4" fill="#e9e9e9"/><rect x="4.6" y="21" width="18.8" height="1.2" fill="#c4c4c4"/><circle cx="18.6" cy="11.4" r=".9" fill="#f0524a"/><circle cx="21.6" cy="11.4" r=".9" fill="#3aa8f0"/><circle cx="24.4" cy="11.4" r=".9" fill="#58c85a"/><path d="M10 17.4 q2 -2.4 3.6 -.6 q1.4 1.2 3.4 -.6" stroke="#c8702a" stroke-width="1" fill="none"/></svg><div class="lb">Printers</div></div>
<div class="it" style="left:75px;top:211px"><svg class="ic" viewBox="0 0 28 25.6" preserveAspectRatio="none"><rect width="28" height="25.6" rx="5.6" ry="5.6" fill="#ffa20f"/><rect width="28" height="25.6" rx="5.6" ry="5.6" fill="url(#gsh)"/><path d="M9 6.6 L20.4 4.4 V16.2 h-1.9 V8.4 L10.9 9.9 V18 H9 Z" fill="#fff"/><ellipse cx="7.9" cy="18" rx="3" ry="2.4" fill="#fff"/><ellipse cx="17.4" cy="16.3" rx="3" ry="2.4" fill="#fff"/></svg><div class="lb">Sound</div></div>
<div class="it" style="left:144px;top:211px"><svg class="ic" viewBox="0 0 28 25.6" preserveAspectRatio="none"><rect width="28" height="25.6" rx="5.6" ry="5.6" fill="#636363"/><rect width="28" height="25.6" rx="5.6" ry="5.6" fill="url(#gsh)"/><rect x="5.2" y="5.6" width="17.2" height="13.6" fill="#f5957b" stroke="#fbeee8" stroke-width="1"/><path d="M10.6 16.6 L21.2 6.6" stroke="#4a3028" stroke-width="1.5"/><path d="M12 17 L21.6 8" stroke="#c9705a" stroke-width="1.2" opacity=".7"/></svg><div class="lb">Wacom Tablet</div></div>
<div class="it" style="left:6px;top:292px"><svg class="ic" viewBox="0 0 28 25.6" preserveAspectRatio="none"><rect width="28" height="25.6" rx="5.6" ry="5.6" fill="#4b4b4b"/><rect width="28" height="25.6" rx="5.6" ry="5.6" fill="url(#gsh)"/><path d="M7.6 12.2 a6.4 6.4 0 0 1 11.4 -3.6" fill="none" stroke="#f5820f" stroke-width="2.6"/><path d="M4.6 11.2 h6 l-3 4 z" fill="#f5820f"/><path d="M20.4 13.2 a6.4 6.4 0 0 1 -11.4 3.8" fill="none" stroke="#fbc01c" stroke-width="2.6"/><path d="M17.4 14.2 h6 l-3 -4 z" fill="#fbc01c"/></svg><div class="lb">Backups</div></div>
<div class="it" style="left:75px;top:292px"><svg class="ic" viewBox="0 0 28 25.6" preserveAspectRatio="none"><rect width="28" height="25.6" rx="5.6" ry="5.6" fill="#eaeaea"/><g stroke="#1f8be8" fill="none"><circle cx="14.6" cy="12.4" r="6.1" stroke-width="2.3"/><path d="M21.65 12.40 L24.05 12.40" stroke-width="2.18"/><path d="M20.53 16.21 L22.55 17.51" stroke-width="2.18"/><path d="M17.53 18.81 L18.53 21.00" stroke-width="2.18"/><path d="M13.60 19.38 L13.26 21.75" stroke-width="2.18"/><path d="M9.98 17.73 L8.41 19.54" stroke-width="2.18"/><path d="M7.84 14.39 L5.53 15.06" stroke-width="2.18"/><path d="M7.84 10.41 L5.53 9.74" stroke-width="2.18"/><path d="M9.98 7.07 L8.41 5.26" stroke-width="2.18"/><path d="M13.60 5.42 L13.26 3.05" stroke-width="2.18"/><path d="M17.53 5.99 L18.53 3.80" stroke-width="2.18"/><path d="M20.53 8.59 L22.55 7.29" stroke-width="2.18"/></g><circle cx="14.6" cy="12.4" r="1.5" fill="#1f8be8"/><path d="M14.6 6.4 v12 M8.6 12.4 h12" stroke="#1f8be8" stroke-width="1.1"/><g stroke="#2a2377" fill="none"><circle cx="4.2" cy="19.2" r="2.1" stroke-width="1.5"/><path d="M6.85 19.20 L8.45 19.20" stroke-width="1.42"/><path d="M6.07 21.07 L7.21 22.21" stroke-width="1.42"/><path d="M4.20 21.85 L4.20 23.45" stroke-width="1.42"/><path d="M2.33 21.07 L1.19 22.21" stroke-width="1.42"/><path d="M1.55 19.20 L-0.05 19.20" stroke-width="1.42"/><path d="M2.33 17.33 L1.19 16.19" stroke-width="1.42"/><path d="M4.20 16.55 L4.20 14.95" stroke-width="1.42"/><path d="M6.07 17.33 L7.21 16.19" stroke-width="1.42"/></g><g stroke="#1c58b8" fill="none"><circle cx="18.6" cy="20.2" r="1.7" stroke-width="1.3"/><path d="M20.75 20.20 L22.05 20.20" stroke-width="1.23"/><path d="M20.12 21.72 L21.04 22.64" stroke-width="1.23"/><path d="M18.60 22.35 L18.60 23.65" stroke-width="1.23"/><path d="M17.08 21.72 L16.16 22.64" stroke-width="1.23"/><path d="M16.45 20.20 L15.15 20.20" stroke-width="1.23"/><path d="M17.08 18.68 L16.16 17.76" stroke-width="1.23"/><path d="M18.60 18.05 L18.60 16.75" stroke-width="1.23"/><path d="M20.12 18.68 L21.04 17.76" stroke-width="1.23"/></g></svg><div class="lb">Details</div></div>
<div class="it" style="left:144px;top:292px"><svg class="ic" viewBox="0 0 28 25.6" preserveAspectRatio="none"><defs><linearGradient id="gsw" x1="0" y1="0" x2="0" y2="1"><stop offset="0" stop-color="#8d1cd2"/><stop offset=".4" stop-color="#a81df2"/><stop offset="1" stop-color="#b81efa"/></linearGradient></defs><rect width="28" height="25.6" rx="5.6" fill="url(#gsw)"/><rect x="10.6" y="0" width="7" height="10.8" fill="#61189e"/><rect x="12.6" y="0" width="3" height="10.8" fill="#3f0f6c"/><rect x="3.6" y="13.6" width="8.6" height="7.6" rx=".6" fill="#f5e8fd"/><rect x="4.8" y="15.6" width="6.2" height="1.1" fill="#a84ce0"/><rect x="4.8" y="18" width="6.2" height="1.1" fill="#a84ce0"/></svg><div class="lb">Software &amp;<br>Updates</div></div>
<div class="it" style="left:213px;top:292px"><svg class="ic" viewBox="0 0 28 25.6" preserveAspectRatio="none"><rect width="28" height="25.6" rx="5.6" ry="5.6" fill="#e6e6e6"/><circle cx="14" cy="12.8" r="10.7" fill="#f8f8f8" stroke="#d2d2d2" stroke-width=".7"/><circle cx="22.80" cy="12.80" r=".45" fill="#777"/><circle cx="21.62" cy="17.20" r=".45" fill="#777"/><circle cx="18.40" cy="20.42" r=".45" fill="#777"/><circle cx="14.00" cy="21.60" r=".45" fill="#777"/><circle cx="9.60" cy="20.42" r=".45" fill="#777"/><circle cx="6.38" cy="17.20" r=".45" fill="#777"/><circle cx="5.20" cy="12.80" r=".45" fill="#777"/><circle cx="6.38" cy="8.40" r=".45" fill="#777"/><circle cx="9.60" cy="5.18" r=".45" fill="#777"/><circle cx="14.00" cy="4.00" r=".45" fill="#777"/><circle cx="18.40" cy="5.18" r=".45" fill="#777"/><circle cx="21.62" cy="8.40" r=".45" fill="#777"/><path d="M14 12.8 L13.4 6.8" stroke="#1a1a1a" stroke-width="1.3"/><path d="M14 12.8 L10.4 17.8" stroke="#1a1a1a" stroke-width="1.5"/><path d="M14 12.8 L20.6 14.4" stroke="#e53935" stroke-width="1"/><circle cx="14" cy="12.8" r="1" fill="#1a1a1a"/></svg><div class="lb">Time &amp; Date</div></div>
<div class="it" style="left:282px;top:292px"><svg class="ic" viewBox="0 0 28 25.6" preserveAspectRatio="none"><rect width="28" height="25.6" rx="5.6" ry="5.6" fill="#1f97ea"/><rect width="28" height="25.6" rx="5.6" ry="5.6" fill="url(#gsh)"/><circle cx="14" cy="7.2" r="1.7" fill="#fff"/><path d="M7 8.6 L12.6 10 h2.8 L21 8.6 l.3 1.2 L15.8 11.4 V14.6 L18 20.4 l-1.2 .5 L14 15.8 L11.2 20.9 L10 20.4 L12.2 14.6 V11.4 L6.7 9.8 Z" fill="#fff"/></svg><div class="lb">Universal<br>Access</div></div>
<div class="it" style="left:351px;top:292px"><svg class="ic" viewBox="0 0 28 25.6" preserveAspectRatio="none"><rect width="28" height="25.6" rx="5.6" ry="5.6" fill="#ec3d51"/><rect width="28" height="25.6" rx="5.6" ry="5.6" fill="url(#gsh)"/><circle cx="14" cy="9.2" r="3.5" fill="#fff"/><path d="M8 18.8 v-2.6 a2.6 2.6 0 0 1 2.6 -2.6 h6.8 a2.6 2.6 0 0 1 2.6 2.6 v2.6 z" fill="#fff"/></svg><div class="lb">User<br>Accounts</div></div>

</div>
</body>
</html>
